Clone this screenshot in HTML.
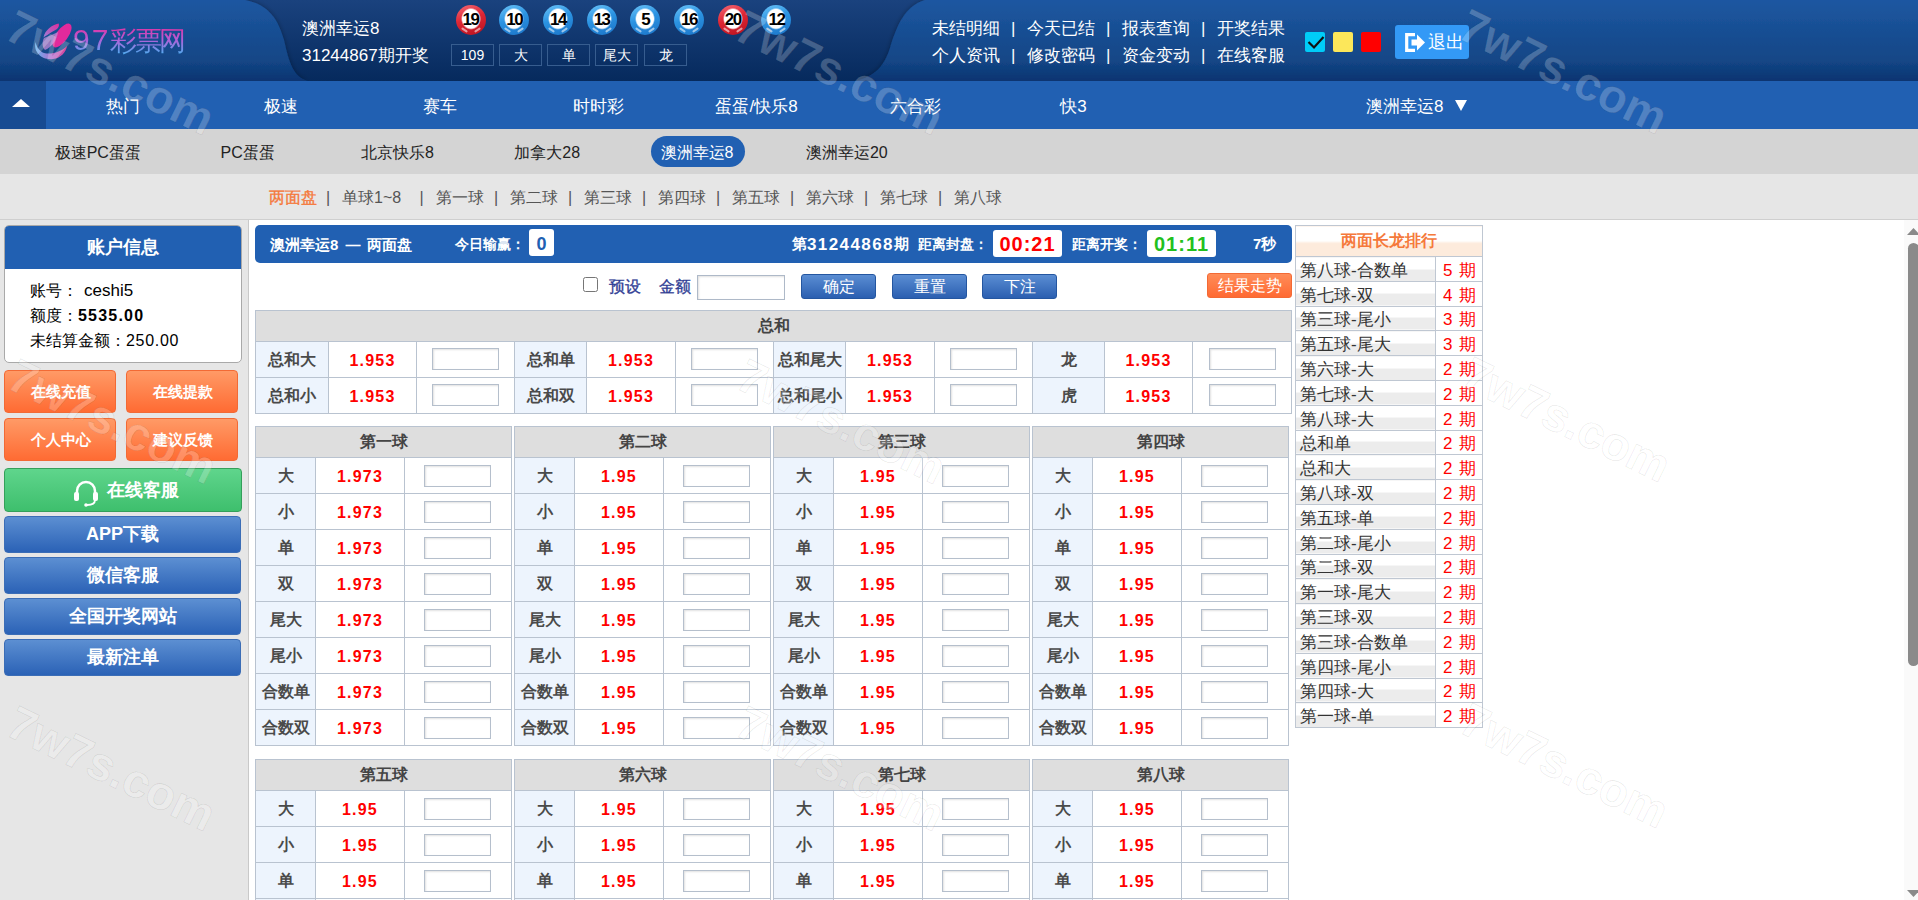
<!DOCTYPE html><html><head><meta charset="utf-8"><style>
*{margin:0;padding:0;box-sizing:border-box}
html,body{width:1918px;height:900px;overflow:hidden;background:#fff;font-family:"Liberation Sans",sans-serif;font-size:14px;color:#333}
.t{position:absolute;white-space:nowrap;line-height:1}
.c{position:absolute;white-space:nowrap;line-height:1;text-align:center}
#hdr{position:absolute;left:0;top:0;width:1918px;height:81px;overflow:hidden}
#nav{position:absolute;left:0;top:81px;width:1918px;height:48px;background:#2160b2;color:#fff;font-size:17px}
#nav .up{position:absolute;left:0;top:0;width:46px;height:48px;background:#174b92}
#sub{position:absolute;left:0;top:129px;width:1918px;height:45px;background:#d4d4d4;font-size:16px;color:#222}
#sub2{position:absolute;left:0;top:174px;width:1918px;height:46px;background:#e6e6e6;border-bottom:1px solid #cfcfcf;font-size:16px;color:#555}
#side{position:absolute;left:0;top:220px;width:249px;height:680px;background:#e6e6e6;border-right:1px solid #c9c9c9}
.ball{position:absolute;width:30px;height:30px;border-radius:50%;font-weight:bold;font-size:17px;color:#000;text-align:center;line-height:30px;letter-spacing:-1.5px;overflow:hidden}
.ball span{position:relative;z-index:2}
.ball:before,.ball:after{content:"";position:absolute;bottom:4px;width:7px;height:2px;background:rgba(255,255,255,0.55);border-radius:1px}
.ball:before{left:5px;transform:rotate(35deg)}
.ball:after{right:5px;transform:rotate(-35deg)}
.ball.b{background:radial-gradient(10px 11px at 50% 46%,#fff 0,#fff 85%,rgba(255,255,255,0) 100%),linear-gradient(160deg,#6cc4f8 0%,#2b93e2 45%,#1b74c8 100%)}
.ball.r{background:radial-gradient(10px 11px at 50% 46%,#fff 0,#fff 85%,rgba(255,255,255,0) 100%),linear-gradient(160deg,#f36a76 0%,#de2634 45%,#b8121e 100%)}
.box{position:absolute;top:44px;height:22px;border:1px solid #375d8f;color:#fff;font-size:14px;text-align:center;line-height:20px}
.hl{position:absolute;color:#fff;font-size:17px;line-height:1;white-space:nowrap}
</style></head><body>
<div id="hdr"><svg width="1918" height="81" style="position:absolute;left:0;top:0"><defs><linearGradient id="gd" x1="0" y1="0" x2="0" y2="1"><stop offset="0" stop-color="#1a427e"/><stop offset="1" stop-color="#062a5d"/></linearGradient><linearGradient id="gl" x1="0" y1="0" x2="0" y2="1"><stop offset="0" stop-color="#1d57a1"/><stop offset="0.75" stop-color="#134686"/><stop offset="1" stop-color="#0b3471"/></linearGradient><filter id="sh" x="-10%" y="-10%" width="120%" height="130%"><feDropShadow dx="0" dy="0" stdDeviation="2.5" flood-color="#000" flood-opacity="0.35"/></filter></defs><rect width="1918" height="81" fill="url(#gd)"/><path d="M0 0 L245 0 C270 5 278 20 284 40 C289 62 293 77 308 81 L0 81 Z" fill="url(#gl)" filter="url(#sh)"/><path d="M1918 0 L925 0 C905 6 897 25 890 48 C884 66 876 76 855 81 L1918 81 Z" fill="url(#gl)" filter="url(#sh)"/></svg>
<svg width="40" height="42" style="position:absolute;left:33px;top:20px" viewBox="0 0 40 42"><defs><linearGradient id="lg2" x1="0" y1="0" x2="1" y2="0"><stop offset="0" stop-color="#62b4f0"/><stop offset="0.5" stop-color="#b070d0"/><stop offset="1" stop-color="#e0409c"/></linearGradient><linearGradient id="lg3" x1="0" y1="1" x2="1" y2="0"><stop offset="0" stop-color="#9a80d8"/><stop offset="1" stop-color="#e02c9c"/></linearGradient></defs><ellipse cx="29" cy="15.5" rx="6" ry="14" transform="rotate(36 29 15.5)" fill="#e22a9c"/><path d="M25.5 3.5 C19 5 12 10 10.5 17.5 C13 16 17 13 24 9 C26 7 26.5 5 25.5 3.5 Z" fill="url(#lg3)"/><path d="M11 18 C16 16 21 14 25 12 C24 20 19 27 12 30 C9 27 9 22 11 18Z" fill="#c088d8" opacity="0.75"/><path d="M2.5 22 C0 33 10 40.5 20 39 C28 38 33 32 34 26 C28 32 18 35 11 33 C6 31 3.5 26.5 2.5 22 Z" fill="url(#lg2)"/></svg>
<div class="t" style="left:73px;top:25px;font-size:28px;font-weight:300;white-space:nowrap;background:linear-gradient(0deg,#4ab0f0 0%,#b060d8 50%,#e82c9c 100%);-webkit-background-clip:text;color:transparent"><span style="letter-spacing:2px;font-size:30px;font-weight:200">97</span><span style="letter-spacing:-2.5px;font-size:26.5px">彩票网</span></div>
<div class="hl" style="left:302px;top:20px">澳洲幸运8</div>
<div class="hl" style="left:302px;top:47px">31244867期开奖</div>
<div class="ball r" style="left:455.5px;top:5px"><span>19</span></div>
<div class="ball b" style="left:499.2px;top:5px"><span>10</span></div>
<div class="ball b" style="left:542.9px;top:5px"><span>14</span></div>
<div class="ball b" style="left:586.6px;top:5px"><span>13</span></div>
<div class="ball b" style="left:630.3px;top:5px"><span>5</span></div>
<div class="ball b" style="left:674.0px;top:5px"><span>16</span></div>
<div class="ball r" style="left:717.7px;top:5px"><span>20</span></div>
<div class="ball b" style="left:761.4px;top:5px"><span>12</span></div>
<div class="box" style="left:451px;width:43px">109</div>
<div class="box" style="left:499px;width:43px">大</div>
<div class="box" style="left:547px;width:43px">单</div>
<div class="box" style="left:595px;width:43px">尾大</div>
<div class="box" style="left:644px;width:43px">龙</div>
<div class="hl" style="left:932px;top:20px">未结明细</div>
<div class="hl" style="left:1011px;top:20px">|</div>
<div class="hl" style="left:1027px;top:20px">今天已结</div>
<div class="hl" style="left:1106px;top:20px">|</div>
<div class="hl" style="left:1122px;top:20px">报表查询</div>
<div class="hl" style="left:1201px;top:20px">|</div>
<div class="hl" style="left:1217px;top:20px">开奖结果</div>
<div class="hl" style="left:932px;top:47px">个人资讯</div>
<div class="hl" style="left:1011px;top:47px">|</div>
<div class="hl" style="left:1027px;top:47px">修改密码</div>
<div class="hl" style="left:1106px;top:47px">|</div>
<div class="hl" style="left:1122px;top:47px">资金变动</div>
<div class="hl" style="left:1201px;top:47px">|</div>
<div class="hl" style="left:1217px;top:47px">在线客服</div>
<div style="position:absolute;left:1305px;top:32px;width:20px;height:20px;background:#00ccf8;border-radius:2px"></div>
<svg width="20" height="20" style="position:absolute;left:1305px;top:32px"><path d="M3.5 10 L9 15.5 L18.5 5" stroke="#111" stroke-width="2.2" fill="none"/></svg>
<div style="position:absolute;left:1333px;top:32px;width:20px;height:20px;background:#fce75a;border-radius:2px"></div>
<div style="position:absolute;left:1361px;top:32px;width:20px;height:20px;background:#ff0000;border-radius:2px"></div>
<div style="position:absolute;left:1395px;top:25px;width:74px;height:34px;background:#3399f6;border-radius:3px"></div>
<svg width="22" height="20" style="position:absolute;left:1405px;top:33px" viewBox="0 0 22 20"><path d="M10 1.7 H1.7 V17.3 H10" stroke="#fff" stroke-width="3.2" fill="none"/><path d="M6.5 6.5 H12 V1.5 L20 9.5 L12 17.5 V12.5 H6.5 Z" fill="#fff"/></svg>
<div class="hl" style="left:1428px;top:34px;font-size:17.5px">退出</div>
</div>
<div id="nav"><div class="up"></div>
<svg width="46" height="48" style="position:absolute;left:0;top:0"><path d="M12 26 L21 18 L30 26 Z" fill="#fff"/></svg>
<div class="c" style="left:22.5px;width:200px;top:17px">热门</div>
<div class="c" style="left:181.0px;width:200px;top:17px">极速</div>
<div class="c" style="left:339.5px;width:200px;top:17px">赛车</div>
<div class="c" style="left:498.0px;width:200px;top:17px">时时彩</div>
<div class="c" style="left:656.5px;width:200px;top:17px">蛋蛋/快乐8</div>
<div class="c" style="left:815.0px;width:200px;top:17px">六合彩</div>
<div class="c" style="left:973.5px;width:200px;top:17px">快3</div>
<div class="t" style="left:1366px;top:17px">澳洲幸运8</div>
<svg width="14" height="14" style="position:absolute;left:1454px;top:17px"><path d="M1 2 H13 L7 13 Z" fill="#fff"/></svg>
</div>
<div id="sub">
<div class="c" style="left:-2.2px;width:200px;top:16px">极速PC蛋蛋</div>
<div class="c" style="left:147.6px;width:200px;top:16px">PC蛋蛋</div>
<div class="c" style="left:297.4px;width:200px;top:16px">北京快乐8</div>
<div class="c" style="left:447.2px;width:200px;top:16px">加拿大28</div>
<div style="position:absolute;left:651px;top:7px;width:94px;height:31px;border-radius:16px;background:#2160b2"></div>
<div class="c" style="left:597.0px;width:200px;top:16px;color:#fff">澳洲幸运8</div>
<div class="c" style="left:746.8px;width:200px;top:16px">澳洲幸运20</div>
</div>
<div id="sub2">
<div class="t" style="left:269px;top:16px;color:#f5793b;-webkit-text-stroke:0.35px #f5793b">两面盘</div>
<div class="t" style="left:326px;top:16px">|</div>
<div class="t" style="left:342px;top:16px;color:#555">单球1~8</div>
<div class="t" style="left:419.5px;top:16px">|</div>
<div class="t" style="left:436px;top:16px;color:#555">第一球</div>
<div class="t" style="left:494px;top:16px">|</div>
<div class="t" style="left:510px;top:16px;color:#555">第二球</div>
<div class="t" style="left:568px;top:16px">|</div>
<div class="t" style="left:584px;top:16px;color:#555">第三球</div>
<div class="t" style="left:642px;top:16px">|</div>
<div class="t" style="left:658px;top:16px;color:#555">第四球</div>
<div class="t" style="left:716px;top:16px">|</div>
<div class="t" style="left:732px;top:16px;color:#555">第五球</div>
<div class="t" style="left:790px;top:16px">|</div>
<div class="t" style="left:806px;top:16px;color:#555">第六球</div>
<div class="t" style="left:864px;top:16px">|</div>
<div class="t" style="left:880px;top:16px;color:#555">第七球</div>
<div class="t" style="left:938px;top:16px">|</div>
<div class="t" style="left:954px;top:16px;color:#555">第八球</div>
</div>
<div id="side"></div>
<style>
.side-box{position:absolute;left:4px;top:225px;width:238px;height:138px;background:#fff;border:1px solid #a9a9a9;border-radius:5px;overflow:hidden}
.side-box .hd{position:absolute;left:-1px;top:-1px;width:238px;height:44px;background:#2160b2;border-radius:5px 5px 0 0;color:#fff;font-weight:bold;font-size:18px;text-align:center;line-height:44px}
.side-box .ln{position:absolute;left:25px;font-size:16px;color:#000;white-space:nowrap;line-height:1}
.obtn{position:absolute;width:112px;height:43px;border:1px solid #f26a35;border-radius:4px;background:linear-gradient(#ff9a66,#ff6b33);color:#fff;font-weight:bold;font-size:15px;text-align:center;line-height:42px;padding-left:2px}
.gbtn{position:absolute;left:4px;top:468px;width:238px;height:44px;border:1px solid #34a05a;border-radius:4px;background:linear-gradient(#5fd58c,#3ebf6d)}
.bbtn{position:absolute;left:4px;width:237px;height:37px;border:1px solid #3b6db6;border-radius:4px;background:linear-gradient(#5c8fd2,#2b62b6);color:#fff;font-weight:bold;font-size:18px;text-align:center;line-height:35px}
.chd{position:absolute;left:255px;top:225px;width:1037px;height:38px;background:#2160b2;border-radius:5px;color:#fff;font-weight:bold;font-size:14px}
.wbox{position:absolute;background:#fff;border-radius:3px;font-weight:bold;text-align:center}
.btn2{position:absolute;top:274px;width:75px;height:25px;border:1px solid #2456a0;border-radius:3px;background:linear-gradient(#5a8dd3,#2b5fb0);color:#fff;font-size:16px;text-align:center;line-height:23px}
table.g{position:absolute;border-collapse:collapse;table-layout:fixed}
table.g td,table.g th{border:1px solid #b9c3d0;padding:0;text-align:center;white-space:nowrap}
table.g th{background:#dedede;font-weight:bold;font-size:16px;color:#444}
table.g td.l{padding-top:2px;background:#edf4fd;font-weight:bold;font-size:16px;color:#4a4a4a}
table.g td.o{padding-top:2px;color:#f00;font-weight:bold;font-size:16px;letter-spacing:1.2px}
.inp{position:relative;top:-1px;display:inline-block;width:67px;height:22px;border:1px solid #b5bfcc;background:#fff;box-shadow:inset 1px 1px 2px rgba(0,0,0,0.12);vertical-align:middle}
table.rk{position:absolute;left:1295px;top:225px;border-collapse:collapse;table-layout:fixed}
table.rk td{border:1px solid #bfc7d2;padding:0;white-space:nowrap;font-size:17px;height:24.8px;line-height:1}
table.rk td{padding-top:3px !important}
table.rk td.n{background:linear-gradient(#fff 0,#fff 50%,#ececec 50%,#ececec 100%);color:#333;padding-left:4px}
table.rk td.p{color:#f00;padding-left:7px}
table.rk th{height:31px;background:linear-gradient(#fff 0,#fff 48%,#fdebdc 56%,#fdebdc 100%);color:#f5793b;font-size:16px;font-weight:bold;border:1px solid #bfc7d2}
.wm{position:absolute;font-weight:bold;font-size:47px;color:rgba(255,255,255,0.22);white-space:nowrap;line-height:1;transform-origin:0 0;transform:rotate(26deg);-webkit-text-stroke:0.8px rgba(0,0,0,0.09)}
</style>
<div class="side-box"><div class="hd">账户信息</div><div class="ln" style="top:57px">账号：</div><div class="ln" style="top:56px;left:79px;font-size:17px">ceshi5</div><div class="ln" style="top:82px">额度：<b style="letter-spacing:1.2px">5535.00</b></div><div class="ln" style="top:107px">未结算金额：<span style="letter-spacing:0.7px">250.00</span></div></div>
<div class="obtn" style="left:4px;top:370px">在线充值</div>
<div class="obtn" style="left:126px;top:370px">在线提款</div>
<div class="obtn" style="left:4px;top:418px">个人中心</div>
<div class="obtn" style="left:126px;top:418px">建议反馈</div>
<div class="gbtn"></div>
<svg width="28" height="28" style="position:absolute;left:72px;top:479px" viewBox="0 0 28 28"><path d="M5 15 V12 A9 9 0 0 1 23 12 V15" stroke="#fff" stroke-width="2.5" fill="none"/><rect x="2" y="13" width="5" height="9" rx="2" fill="#fff"/><rect x="21" y="13" width="5" height="9" rx="2" fill="#fff"/><path d="M23 21 C23 25 20 26 15 26" stroke="#fff" stroke-width="1.8" fill="none"/><circle cx="14" cy="26" r="1.8" fill="#fff"/></svg>
<div class="t" style="left:107px;top:481px;color:#fff;font-weight:bold;font-size:18px">在线客服</div>
<div class="bbtn" style="top:516px">APP下载</div>
<div class="bbtn" style="top:557px">微信客服</div>
<div class="bbtn" style="top:598px">全国开奖网站</div>
<div class="bbtn" style="top:639px">最新注单</div>
<div class="chd"><div class="t" style="left:15px;top:12px;font-size:15px">澳洲幸运<span style="letter-spacing:1px">8</span> <span style="margin:0 2px">—</span> 两面盘</div><div class="t" style="left:200px;top:12px">今日输赢：</div><div class="wbox" style="left:274px;top:4px;width:25px;height:27px;color:#2160b2;font-size:18px;line-height:30px">0</div><div class="t" style="left:537px;top:11px;font-size:15px">第<span style="letter-spacing:1.4px;font-size:17px;vertical-align:-1px">31244868</span>期</div><div class="t" style="left:663px;top:12px">距离封盘：</div><div class="wbox" style="left:738px;top:5px;width:69px;height:27px;color:#f00;font-size:20px;line-height:29px;letter-spacing:1px">00:21</div><div class="t" style="left:817px;top:12px">距离开奖：</div><div class="wbox" style="left:892px;top:5px;width:69px;height:27px;color:#22c01e;font-size:20px;line-height:29px;letter-spacing:1px">01:11</div><div class="t" style="left:998px;top:11px;font-size:15px">7秒</div></div>
<div style="position:absolute;left:583px;top:277px;width:15px;height:15px;border:1px solid #767676;border-radius:2.5px;background:#fff"></div>
<div class="t" style="left:609px;top:279px;font-size:16px;font-weight:normal;-webkit-text-stroke:0.3px #2f3d94;color:#2f3d94">预设</div>
<div class="t" style="left:659px;top:279px;font-size:16px;font-weight:normal;-webkit-text-stroke:0.3px #2f3d94;color:#2f3d94">金额</div>
<div style="position:absolute;left:697px;top:275px;width:88px;height:25px;border:1px solid #aeb9c8;box-shadow:inset 1px 1px 2px rgba(0,0,0,0.12)"></div>
<div class="btn2" style="left:801px">确定</div>
<div class="btn2" style="left:892px">重置</div>
<div class="btn2" style="left:982px">下注</div>
<div style="position:absolute;left:1207px;top:273px;width:85px;height:25px;border:1px solid #f36a35;border-radius:3px;background:linear-gradient(#ff8c58,#ff6a33);color:#fff;font-size:16px;text-align:center;line-height:23px">结果走势</div>
<table class="g" style="left:255px;top:310px;width:1037px"><colgroup><col style="width:73px"><col style="width:88px"><col style="width:98px"><col style="width:72px"><col style="width:89px"><col style="width:98px"><col style="width:72px"><col style="width:89px"><col style="width:98px"><col style="width:72px"><col style="width:88px"><col style="width:99px"></colgroup><tr><th colspan="12" style="height:31px">总和</th></tr><tr><td class="l" style="height:36px">总和大</td><td class="o">1.953</td><td><span class="inp"></span></td><td class="l" style="height:36px">总和单</td><td class="o">1.953</td><td><span class="inp"></span></td><td class="l" style="height:36px">总和尾大</td><td class="o">1.953</td><td><span class="inp"></span></td><td class="l" style="height:36px">龙</td><td class="o">1.953</td><td><span class="inp"></span></td></tr><tr><td class="l" style="height:36px">总和小</td><td class="o">1.953</td><td><span class="inp"></span></td><td class="l" style="height:36px">总和双</td><td class="o">1.953</td><td><span class="inp"></span></td><td class="l" style="height:36px">总和尾小</td><td class="o">1.953</td><td><span class="inp"></span></td><td class="l" style="height:36px">虎</td><td class="o">1.953</td><td><span class="inp"></span></td></tr></table>
<table class="g" style="left:255px;top:426px;width:256px"><colgroup><col style="width:60px"><col style="width:89px"><col style="width:107px"></colgroup><tr><th colspan="3" style="height:31px">第一球</th></tr><tr><td class="l" style="height:36px">大</td><td class="o">1.973</td><td><span class="inp" style="margin-left:-2px;top:0"></span></td></tr><tr><td class="l" style="height:36px">小</td><td class="o">1.973</td><td><span class="inp" style="margin-left:-2px;top:0"></span></td></tr><tr><td class="l" style="height:36px">单</td><td class="o">1.973</td><td><span class="inp" style="margin-left:-2px;top:0"></span></td></tr><tr><td class="l" style="height:36px">双</td><td class="o">1.973</td><td><span class="inp" style="margin-left:-2px;top:0"></span></td></tr><tr><td class="l" style="height:36px">尾大</td><td class="o">1.973</td><td><span class="inp" style="margin-left:-2px;top:0"></span></td></tr><tr><td class="l" style="height:36px">尾小</td><td class="o">1.973</td><td><span class="inp" style="margin-left:-2px;top:0"></span></td></tr><tr><td class="l" style="height:36px">合数单</td><td class="o">1.973</td><td><span class="inp" style="margin-left:-2px;top:0"></span></td></tr><tr><td class="l" style="height:36px">合数双</td><td class="o">1.973</td><td><span class="inp" style="margin-left:-2px;top:0"></span></td></tr></table>
<table class="g" style="left:514px;top:426px;width:256px"><colgroup><col style="width:60px"><col style="width:89px"><col style="width:107px"></colgroup><tr><th colspan="3" style="height:31px">第二球</th></tr><tr><td class="l" style="height:36px">大</td><td class="o">1.95</td><td><span class="inp" style="margin-left:-2px;top:0"></span></td></tr><tr><td class="l" style="height:36px">小</td><td class="o">1.95</td><td><span class="inp" style="margin-left:-2px;top:0"></span></td></tr><tr><td class="l" style="height:36px">单</td><td class="o">1.95</td><td><span class="inp" style="margin-left:-2px;top:0"></span></td></tr><tr><td class="l" style="height:36px">双</td><td class="o">1.95</td><td><span class="inp" style="margin-left:-2px;top:0"></span></td></tr><tr><td class="l" style="height:36px">尾大</td><td class="o">1.95</td><td><span class="inp" style="margin-left:-2px;top:0"></span></td></tr><tr><td class="l" style="height:36px">尾小</td><td class="o">1.95</td><td><span class="inp" style="margin-left:-2px;top:0"></span></td></tr><tr><td class="l" style="height:36px">合数单</td><td class="o">1.95</td><td><span class="inp" style="margin-left:-2px;top:0"></span></td></tr><tr><td class="l" style="height:36px">合数双</td><td class="o">1.95</td><td><span class="inp" style="margin-left:-2px;top:0"></span></td></tr></table>
<table class="g" style="left:773px;top:426px;width:256px"><colgroup><col style="width:60px"><col style="width:89px"><col style="width:107px"></colgroup><tr><th colspan="3" style="height:31px">第三球</th></tr><tr><td class="l" style="height:36px">大</td><td class="o">1.95</td><td><span class="inp" style="margin-left:-2px;top:0"></span></td></tr><tr><td class="l" style="height:36px">小</td><td class="o">1.95</td><td><span class="inp" style="margin-left:-2px;top:0"></span></td></tr><tr><td class="l" style="height:36px">单</td><td class="o">1.95</td><td><span class="inp" style="margin-left:-2px;top:0"></span></td></tr><tr><td class="l" style="height:36px">双</td><td class="o">1.95</td><td><span class="inp" style="margin-left:-2px;top:0"></span></td></tr><tr><td class="l" style="height:36px">尾大</td><td class="o">1.95</td><td><span class="inp" style="margin-left:-2px;top:0"></span></td></tr><tr><td class="l" style="height:36px">尾小</td><td class="o">1.95</td><td><span class="inp" style="margin-left:-2px;top:0"></span></td></tr><tr><td class="l" style="height:36px">合数单</td><td class="o">1.95</td><td><span class="inp" style="margin-left:-2px;top:0"></span></td></tr><tr><td class="l" style="height:36px">合数双</td><td class="o">1.95</td><td><span class="inp" style="margin-left:-2px;top:0"></span></td></tr></table>
<table class="g" style="left:1032px;top:426px;width:256px"><colgroup><col style="width:60px"><col style="width:89px"><col style="width:107px"></colgroup><tr><th colspan="3" style="height:31px">第四球</th></tr><tr><td class="l" style="height:36px">大</td><td class="o">1.95</td><td><span class="inp" style="margin-left:-2px;top:0"></span></td></tr><tr><td class="l" style="height:36px">小</td><td class="o">1.95</td><td><span class="inp" style="margin-left:-2px;top:0"></span></td></tr><tr><td class="l" style="height:36px">单</td><td class="o">1.95</td><td><span class="inp" style="margin-left:-2px;top:0"></span></td></tr><tr><td class="l" style="height:36px">双</td><td class="o">1.95</td><td><span class="inp" style="margin-left:-2px;top:0"></span></td></tr><tr><td class="l" style="height:36px">尾大</td><td class="o">1.95</td><td><span class="inp" style="margin-left:-2px;top:0"></span></td></tr><tr><td class="l" style="height:36px">尾小</td><td class="o">1.95</td><td><span class="inp" style="margin-left:-2px;top:0"></span></td></tr><tr><td class="l" style="height:36px">合数单</td><td class="o">1.95</td><td><span class="inp" style="margin-left:-2px;top:0"></span></td></tr><tr><td class="l" style="height:36px">合数双</td><td class="o">1.95</td><td><span class="inp" style="margin-left:-2px;top:0"></span></td></tr></table>
<table class="g" style="left:255px;top:759px;width:256px"><colgroup><col style="width:60px"><col style="width:89px"><col style="width:107px"></colgroup><tr><th colspan="3" style="height:31px">第五球</th></tr><tr><td class="l" style="height:36px">大</td><td class="o">1.95</td><td><span class="inp" style="margin-left:-2px;top:0"></span></td></tr><tr><td class="l" style="height:36px">小</td><td class="o">1.95</td><td><span class="inp" style="margin-left:-2px;top:0"></span></td></tr><tr><td class="l" style="height:36px">单</td><td class="o">1.95</td><td><span class="inp" style="margin-left:-2px;top:0"></span></td></tr><tr><td class="l" style="height:36px">双</td><td class="o">1.95</td><td><span class="inp" style="margin-left:-2px;top:0"></span></td></tr><tr><td class="l" style="height:36px">尾大</td><td class="o">1.95</td><td><span class="inp" style="margin-left:-2px;top:0"></span></td></tr><tr><td class="l" style="height:36px">尾小</td><td class="o">1.95</td><td><span class="inp" style="margin-left:-2px;top:0"></span></td></tr><tr><td class="l" style="height:36px">合数单</td><td class="o">1.95</td><td><span class="inp" style="margin-left:-2px;top:0"></span></td></tr><tr><td class="l" style="height:36px">合数双</td><td class="o">1.95</td><td><span class="inp" style="margin-left:-2px;top:0"></span></td></tr></table>
<table class="g" style="left:514px;top:759px;width:256px"><colgroup><col style="width:60px"><col style="width:89px"><col style="width:107px"></colgroup><tr><th colspan="3" style="height:31px">第六球</th></tr><tr><td class="l" style="height:36px">大</td><td class="o">1.95</td><td><span class="inp" style="margin-left:-2px;top:0"></span></td></tr><tr><td class="l" style="height:36px">小</td><td class="o">1.95</td><td><span class="inp" style="margin-left:-2px;top:0"></span></td></tr><tr><td class="l" style="height:36px">单</td><td class="o">1.95</td><td><span class="inp" style="margin-left:-2px;top:0"></span></td></tr><tr><td class="l" style="height:36px">双</td><td class="o">1.95</td><td><span class="inp" style="margin-left:-2px;top:0"></span></td></tr><tr><td class="l" style="height:36px">尾大</td><td class="o">1.95</td><td><span class="inp" style="margin-left:-2px;top:0"></span></td></tr><tr><td class="l" style="height:36px">尾小</td><td class="o">1.95</td><td><span class="inp" style="margin-left:-2px;top:0"></span></td></tr><tr><td class="l" style="height:36px">合数单</td><td class="o">1.95</td><td><span class="inp" style="margin-left:-2px;top:0"></span></td></tr><tr><td class="l" style="height:36px">合数双</td><td class="o">1.95</td><td><span class="inp" style="margin-left:-2px;top:0"></span></td></tr></table>
<table class="g" style="left:773px;top:759px;width:256px"><colgroup><col style="width:60px"><col style="width:89px"><col style="width:107px"></colgroup><tr><th colspan="3" style="height:31px">第七球</th></tr><tr><td class="l" style="height:36px">大</td><td class="o">1.95</td><td><span class="inp" style="margin-left:-2px;top:0"></span></td></tr><tr><td class="l" style="height:36px">小</td><td class="o">1.95</td><td><span class="inp" style="margin-left:-2px;top:0"></span></td></tr><tr><td class="l" style="height:36px">单</td><td class="o">1.95</td><td><span class="inp" style="margin-left:-2px;top:0"></span></td></tr><tr><td class="l" style="height:36px">双</td><td class="o">1.95</td><td><span class="inp" style="margin-left:-2px;top:0"></span></td></tr><tr><td class="l" style="height:36px">尾大</td><td class="o">1.95</td><td><span class="inp" style="margin-left:-2px;top:0"></span></td></tr><tr><td class="l" style="height:36px">尾小</td><td class="o">1.95</td><td><span class="inp" style="margin-left:-2px;top:0"></span></td></tr><tr><td class="l" style="height:36px">合数单</td><td class="o">1.95</td><td><span class="inp" style="margin-left:-2px;top:0"></span></td></tr><tr><td class="l" style="height:36px">合数双</td><td class="o">1.95</td><td><span class="inp" style="margin-left:-2px;top:0"></span></td></tr></table>
<table class="g" style="left:1032px;top:759px;width:256px"><colgroup><col style="width:60px"><col style="width:89px"><col style="width:107px"></colgroup><tr><th colspan="3" style="height:31px">第八球</th></tr><tr><td class="l" style="height:36px">大</td><td class="o">1.95</td><td><span class="inp" style="margin-left:-2px;top:0"></span></td></tr><tr><td class="l" style="height:36px">小</td><td class="o">1.95</td><td><span class="inp" style="margin-left:-2px;top:0"></span></td></tr><tr><td class="l" style="height:36px">单</td><td class="o">1.95</td><td><span class="inp" style="margin-left:-2px;top:0"></span></td></tr><tr><td class="l" style="height:36px">双</td><td class="o">1.95</td><td><span class="inp" style="margin-left:-2px;top:0"></span></td></tr><tr><td class="l" style="height:36px">尾大</td><td class="o">1.95</td><td><span class="inp" style="margin-left:-2px;top:0"></span></td></tr><tr><td class="l" style="height:36px">尾小</td><td class="o">1.95</td><td><span class="inp" style="margin-left:-2px;top:0"></span></td></tr><tr><td class="l" style="height:36px">合数单</td><td class="o">1.95</td><td><span class="inp" style="margin-left:-2px;top:0"></span></td></tr><tr><td class="l" style="height:36px">合数双</td><td class="o">1.95</td><td><span class="inp" style="margin-left:-2px;top:0"></span></td></tr></table>
<table class="rk" style="width:187px"><colgroup><col style="width:140px"><col style="width:47px"></colgroup><tr><th colspan="2">两面长龙排行</th></tr><tr><td class="n">第八球-合数单</td><td class="p">5<span style="margin-left:2px"> </span>期</td></tr><tr><td class="n">第七球-双</td><td class="p">4<span style="margin-left:2px"> </span>期</td></tr><tr><td class="n">第三球-尾小</td><td class="p">3<span style="margin-left:2px"> </span>期</td></tr><tr><td class="n">第五球-尾大</td><td class="p">3<span style="margin-left:2px"> </span>期</td></tr><tr><td class="n">第六球-大</td><td class="p">2<span style="margin-left:2px"> </span>期</td></tr><tr><td class="n">第七球-大</td><td class="p">2<span style="margin-left:2px"> </span>期</td></tr><tr><td class="n">第八球-大</td><td class="p">2<span style="margin-left:2px"> </span>期</td></tr><tr><td class="n">总和单</td><td class="p">2<span style="margin-left:2px"> </span>期</td></tr><tr><td class="n">总和大</td><td class="p">2<span style="margin-left:2px"> </span>期</td></tr><tr><td class="n">第八球-双</td><td class="p">2<span style="margin-left:2px"> </span>期</td></tr><tr><td class="n">第五球-单</td><td class="p">2<span style="margin-left:2px"> </span>期</td></tr><tr><td class="n">第二球-尾小</td><td class="p">2<span style="margin-left:2px"> </span>期</td></tr><tr><td class="n">第二球-双</td><td class="p">2<span style="margin-left:2px"> </span>期</td></tr><tr><td class="n">第一球-尾大</td><td class="p">2<span style="margin-left:2px"> </span>期</td></tr><tr><td class="n">第三球-双</td><td class="p">2<span style="margin-left:2px"> </span>期</td></tr><tr><td class="n">第三球-合数单</td><td class="p">2<span style="margin-left:2px"> </span>期</td></tr><tr><td class="n">第四球-尾小</td><td class="p">2<span style="margin-left:2px"> </span>期</td></tr><tr><td class="n">第四球-大</td><td class="p">2<span style="margin-left:2px"> </span>期</td></tr><tr><td class="n">第一球-单</td><td class="p">2<span style="margin-left:2px"> </span>期</td></tr></table>
<div style="position:absolute;left:1904px;top:220px;width:14px;height:680px;background:#fafafa"></div>
<svg width="14" height="680" style="position:absolute;left:1904px;top:220px"><path d="M3 15 L9.5 8 L16 15 Z" fill="#8a8a8a"/><rect x="4" y="23" width="11" height="423" rx="5.5" fill="#8a8a8a"/><path d="M3 670 L9.5 677 L16 670 Z" fill="#8a8a8a"/></svg>
<div class="wm" style="left:19.5px;top:2px">7w7s.com</div>
<div class="wm" style="left:748.5px;top:2px">7w7s.com</div>
<div class="wm" style="left:1473px;top:1px">7w7s.com</div>
<div class="wm" style="left:22.0px;top:351px">7w7s.com</div>
<div class="wm" style="left:751.0px;top:351px">7w7s.com</div>
<div class="wm" style="left:1475.5px;top:349px">7w7s.com</div>
<div class="wm" style="left:20.5px;top:698px">7w7s.com</div>
<div class="wm" style="left:749.5px;top:698px">7w7s.com</div>
<div class="wm" style="left:1474px;top:695px">7w7s.com</div>
</body></html>
